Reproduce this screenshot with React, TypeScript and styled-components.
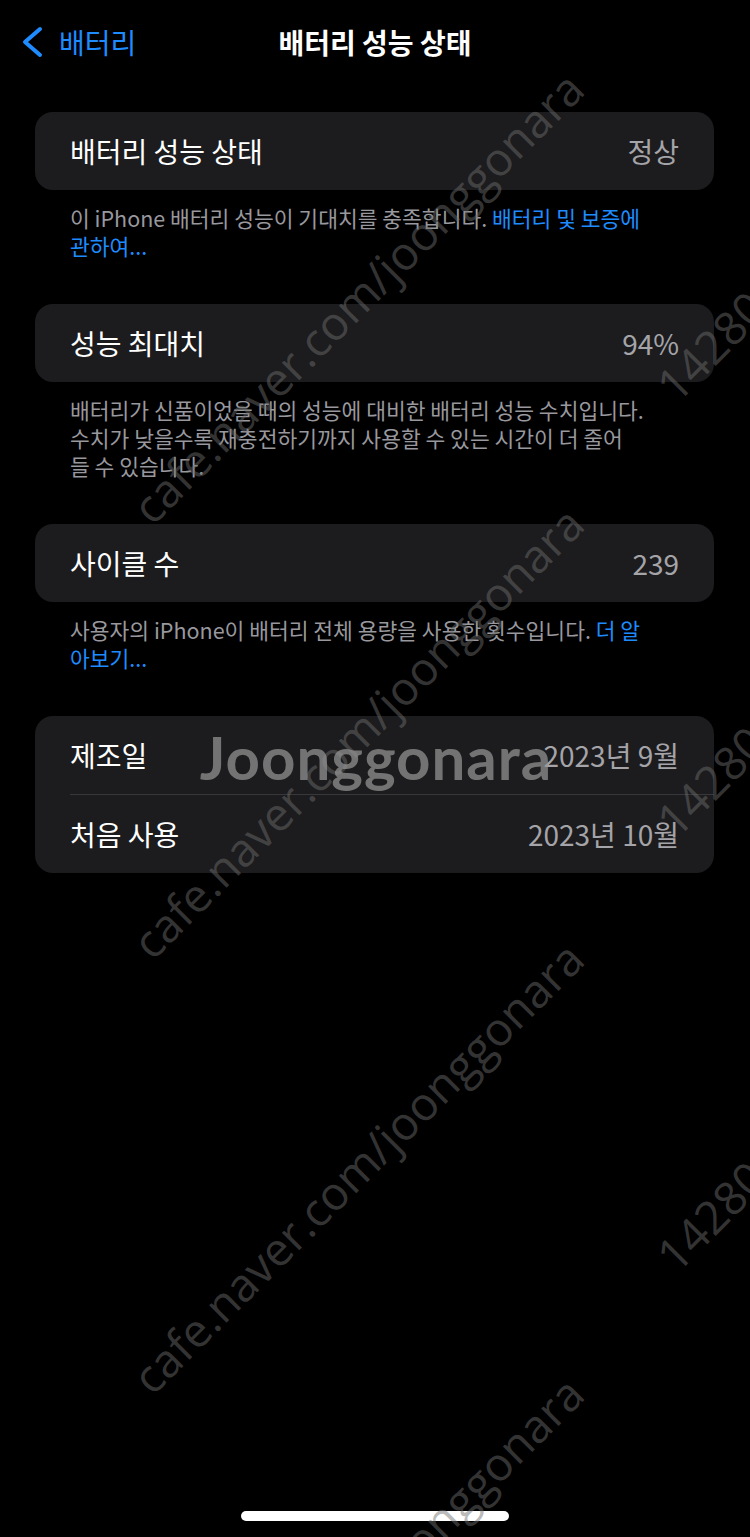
import React from "react";
import styled, { createGlobalStyle } from "styled-components";

const GlobalStyle = createGlobalStyle`
  html, body {
    margin: 0;
    padding: 0;
    background: #000;
  }
  body {
    font-family: "Noto Sans CJK KR", "Noto Sans", sans-serif;
    -webkit-font-smoothing: antialiased;
    overflow-x: hidden;
  }
`;

const Page = styled.div`
  position: relative;
  min-height: 1537px;
  display: flex;
  flex-direction: column;
  overflow: hidden;
  background: #000;
  color: #fff;
`;

// Navigation bar

const NavBar = styled.header`
  height: 84px;
  display: grid;
  grid-template-columns: 1fr auto 1fr;
  align-items: center;
  padding: 0 21px;
`;

const BackButton = styled.button`
  display: flex;
  align-items: center;
  gap: 16px;
  padding: 0;
  border: none;
  background: none;
  color: #1e8cff;
  font-family: inherit;
  font-size: 28px;
  cursor: pointer;
  justify-self: start;
`;

const Title = styled.h1`
  margin: 0;
  font-size: 28px;
  font-weight: 600;
  color: #fff;
`;

// Grouped settings

const Content = styled.main`
  display: flex;
  flex-direction: column;
  gap: 44px;
  padding: 28px 36px 0 35px;
`;

const Group = styled.section`
  display: flex;
  flex-direction: column;
`;

const Card = styled.div`
  background: #1c1c1e;
  border-radius: 18px;
  overflow: hidden;
`;

const Row = styled.div`
  height: 78px;
  display: flex;
  align-items: center;
  justify-content: space-between;
  padding: 0 35px;
  font-size: 28px;
`;

const Label = styled.span`
  color: #fff;
`;

const Value = styled.span`
  color: #a4a4a9;
`;

const Separator = styled.div`
  height: 1px;
  margin-left: 35px;
  background: #38383a;
`;

const Footer = styled.p`
  margin: 0;
  padding: 14px 35px 0;
  font-size: 21.5px;
  line-height: 28px;
  color: #98989e;
  white-space: nowrap;
`;

const Link = styled.a`
  color: #1e8cff;
  text-decoration: none;
`;

const HomeIndicator = styled.div`
  width: 268px;
  height: 10px;
  border-radius: 5px;
  background: #fff;
  margin: auto auto 16px;
`;

// Watermark overlay

const WatermarkLayer = styled.div`
  position: absolute;
  inset: 0;
  pointer-events: none;
  overflow: hidden;
`;

const UrlMark = styled.span<{ $x: number; $y: number }>`
  position: absolute;
  left: ${(p) => p.$x}px;
  top: ${(p) => p.$y}px;
  transform: translate(-50%, -50%) rotate(-45deg);
  font-family: "Open Sans", sans-serif;
  font-size: 46px;
  line-height: 1;
  white-space: nowrap;
  color: rgba(110, 110, 110, 0.48);
`;

const NumberMark = styled.span<{ $x: number; $y: number }>`
  position: absolute;
  left: ${(p) => p.$x}px;
  top: ${(p) => p.$y}px;
  transform-origin: 0 50%;
  transform: translateY(-50%) rotate(-45deg);
  font-family: "Open Sans", sans-serif;
  font-size: 46px;
  line-height: 1;
  white-space: nowrap;
  color: rgba(110, 110, 110, 0.48);
`;

const LogoMark = styled.span`
  position: absolute;
  left: 376px;
  top: 727px;
  transform: translateX(-50%);
  font-family: Lato, sans-serif;
  font-weight: 700;
  font-size: 60px;
  letter-spacing: 1px;
  line-height: 1;
  color: rgba(150, 150, 150, 0.72);
`;

const Chevron = () => (
  <svg width="22" height="32" viewBox="0 0 22 32" fill="none">
    <path
      d="M19 3 L4 16 L19 29"
      stroke="currentColor"
      strokeWidth="4"
      strokeLinecap="round"
      strokeLinejoin="round"
    />
  </svg>
);

const urlMarks = [297, 732, 1167, 1602];
const numberMarks = [392, 827, 1262];

export default function App() {
  return (
    <Page>
      <GlobalStyle />
      <NavBar>
        <BackButton>
          <Chevron />
          배터리
        </BackButton>
        <Title>배터리 성능 상태</Title>
        <span />
      </NavBar>

      <Content>
        <Group>
          <Card>
            <Row>
              <Label>배터리 성능 상태</Label>
              <Value>정상</Value>
            </Row>
          </Card>
          <Footer>
            이 iPhone 배터리 성능이 기대치를 충족합니다. <Link>배터리 및 보증에</Link>
            <br />
            <Link>관하여...</Link>
          </Footer>
        </Group>

        <Group>
          <Card>
            <Row>
              <Label>성능 최대치</Label>
              <Value>94%</Value>
            </Row>
          </Card>
          <Footer>
            배터리가 신품이었을 때의 성능에 대비한 배터리 성능 수치입니다.
            <br />
            수치가 낮을수록 재충전하기까지 사용할 수 있는 시간이 더 줄어
            <br />
            들 수 있습니다.
          </Footer>
        </Group>

        <Group>
          <Card>
            <Row>
              <Label>사이클 수</Label>
              <Value>239</Value>
            </Row>
          </Card>
          <Footer>
            사용자의 iPhone이 배터리 전체 용량을 사용한 횟수입니다. <Link>더 알</Link>
            <br />
            <Link>아보기...</Link>
          </Footer>
        </Group>

        <Group>
          <Card>
            <Row>
              <Label>제조일</Label>
              <Value>2023년 9월</Value>
            </Row>
            <Separator />
            <Row>
              <Label>처음 사용</Label>
              <Value>2023년 10월</Value>
            </Row>
          </Card>
        </Group>
      </Content>

      <HomeIndicator />

      <WatermarkLayer>
        {urlMarks.map((y) => (
          <UrlMark key={y} $x={357} $y={y}>
            cafe.naver.com/joonggonara
          </UrlMark>
        ))}
        {numberMarks.map((y) => (
          <NumberMark key={y} $x={664} $y={y}>
            1428090
          </NumberMark>
        ))}
        <LogoMark>Joonggonara</LogoMark>
      </WatermarkLayer>
    </Page>
  );
}
